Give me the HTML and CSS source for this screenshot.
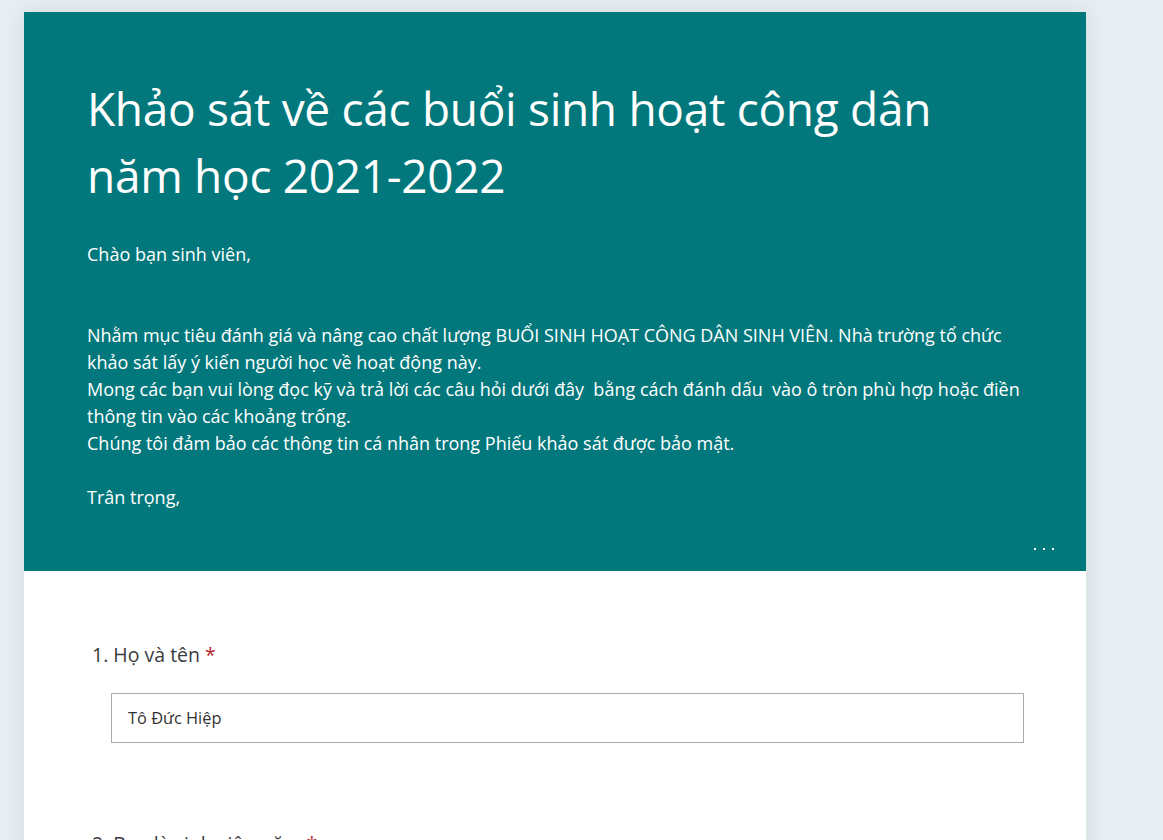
FILE: index.html
```html
<!DOCTYPE html>
<html lang="vi">
<head>
<meta charset="utf-8">
<title>Khảo sát</title>
<link rel="stylesheet" href="styles.css">
</head>
<body>
<div class="page">
  <div class="card">
    <header class="header">
      <h1 class="title">Khảo sát về các buổi sinh hoạt công dân<br>năm học 2021-2022</h1>
      <div class="desc">
        <p>Chào bạn sinh viên,</p>
        <p class="blank">&nbsp;</p>
        <p class="blank">&nbsp;</p>
        <p>Nhằm mục tiêu đánh giá và nâng cao chất lượng BUỔI SINH HOẠT CÔNG DÂN SINH VIÊN. Nhà trường tổ chức<br>khảo sát lấy ý kiến người học về hoạt động này.</p>
        <p>Mong các bạn vui lòng đọc kỹ và trả lời các câu hỏi dưới đây&nbsp; bằng cách đánh dấu&nbsp; vào ô tròn phù hợp hoặc điền<br>thông tin vào các khoảng trống.</p>
        <p>Chúng tôi đảm bảo các thông tin cá nhân trong Phiếu khảo sát được bảo mật.</p>
        <p class="blank">&nbsp;</p>
        <p>Trân trọng,</p>
      </div>
      <div class="more"><span></span><span></span><span></span></div>
    </header>
    <section class="body">
      <div class="question">
        <div class="q-title"><span class="q-num">1.</span> Họ và tên <span class="req">*</span></div>
        <div class="input">Tô Đức Hiệp</div>
      </div>
      <div class="question">
        <div class="q-title"><span class="q-num">2.</span> Bạn là sinh viên năm <span class="req">*</span></div>
      </div>
    </section>
  </div>
</div>
</body>
</html>
```

FILE: styles.css
```css
html, body {
  margin: 0;
  padding: 0;
  background: #e8eff2;
  font-family: "Open Sans", "Noto Sans", sans-serif;
  overflow: hidden;
}
.page {
  padding: 12px 0 0 24px;
}
.card {
  width: 1062px;
  background: #ffffff;
  box-shadow: 0 0 22px rgba(0, 40, 60, 0.10);
}
.header {
  background: #03787c;
  color: #ffffff;
  padding: 63px 30px 0 63px;
  height: 496px;
  position: relative;
}
.title {
  margin: 0;
  font-weight: 400;
  font-size: 46px;
  line-height: 67px;
  letter-spacing: -0.3px;
}
.desc {
  margin-top: 32px;
  font-size: 18px;
  line-height: 27px;
  white-space: nowrap;
}
.desc p {
  margin: 0;
}
.more {
  position: absolute;
  right: 32px;
  bottom: 21px;
  display: flex;
  gap: 7px;
}
.more span {
  width: 2px;
  height: 2px;
  background: #ffffff;
}
.body {
  padding: 71px 62px 40px 68px;
}
.question {
  margin-bottom: 88px;
}
.q-title {
  font-size: 19.5px;
  line-height: 26px;
  color: #3b3b3b;
}
.req {
  color: #b3262c;
}
.input {
  margin: 25px 0 0 19px;
  border: 1px solid #ababab;
  height: 48px;
  line-height: 48px;
  padding-left: 16px;
  font-size: 16.4px;
  color: #333333;
}
```
